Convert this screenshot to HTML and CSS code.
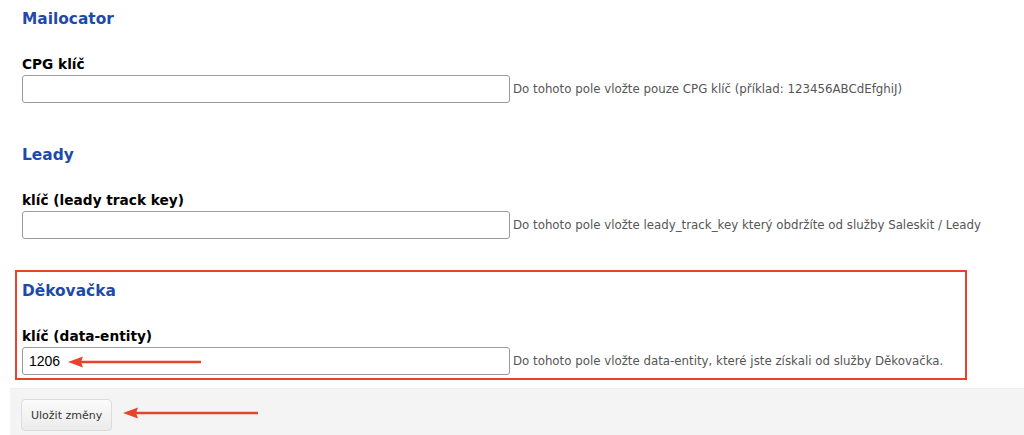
FILE: index.html
```html
<!DOCTYPE html>
<html lang="cs">
<head>
<meta charset="utf-8">
<title>Nastavení</title>
<link rel="stylesheet" href="styles.css">
</head>
<body>
<main class="settings">
  <section class="group">
    <h2 class="group-title">Mailocator</h2>
    <div class="field">
      <label class="field-label" for="cpg">CPG klíč</label>
      <div class="field-row">
        <input class="field-input" id="cpg" type="text" value="">
        <span class="field-help">Do tohoto pole vložte pouze CPG klíč (příklad: 123456ABCdEfghiJ)</span>
      </div>
    </div>
  </section>
  <section class="group">
    <h2 class="group-title">Leady</h2>
    <div class="field">
      <label class="field-label" for="leady">klíč (leady track key)</label>
      <div class="field-row">
        <input class="field-input" id="leady" type="text" value="">
        <span class="field-help">Do tohoto pole vložte leady_track_key který obdržíte od služby Saleskit / Leady</span>
      </div>
    </div>
  </section>
  <section class="group group-highlight">
    <h2 class="group-title">Děkovačka</h2>
    <div class="field">
      <label class="field-label" for="dek">klíč (data-entity)</label>
      <div class="field-row">
        <input class="field-input" id="dek" type="text" value="1206">
        <span class="field-help">Do tohoto pole vložte data-entity, které jste získali od služby Děkovačka.</span>
      </div>
    </div>
  </section>
</main>
<footer class="actions">
  <button class="btn" type="submit">Uložit změny</button>
</footer>

<svg class="arrow arrow-input" width="140" height="14" viewBox="0 0 140 14" aria-hidden="true">
  <line x1="12" y1="7" x2="133" y2="7" stroke="#e8412c" stroke-width="2.5"/>
  <polygon points="0,7 15,1.5 13,7 15,12.5" fill="#e8412c"/>
</svg>
<svg class="arrow arrow-button" width="140" height="14" viewBox="0 0 140 14" aria-hidden="true">
  <line x1="12" y1="7" x2="135" y2="7" stroke="#e8412c" stroke-width="2.5"/>
  <polygon points="0,7 15,1.5 13,7 15,12.5" fill="#e8412c"/>
</svg>
</body>
</html>
```

FILE: styles.css
```css
html, body {
  margin: 0;
  padding: 0;
  background: #ffffff;
}

body {
  position: relative;
  width: 1024px;
  height: 435px;
  overflow: hidden;
  font-family: "DejaVu Sans", Verdana, sans-serif;
  color: #000;
}

.settings {
  display: flex;
  flex-direction: column;
  gap: 26px;
  margin: -2px 0 0 15px;
  width: 952px;
}

.group {
  border: 2px solid transparent;
  padding: 9px 5px 3px;
}

.group-highlight {
  border-color: #e8412c;
}

.group-title {
  margin: 0 0 26px;
  font-size: 15.4px;
  line-height: 20px;
  font-weight: bold;
  color: #1f4aa8;
}

.field-label {
  display: block;
  font-size: 13.7px;
  line-height: 18px;
  font-weight: bold;
  margin-bottom: 2px;
}

.field-row {
  display: flex;
  align-items: center;
  gap: 3px;
}

.field-input {
  flex: none;
  box-sizing: border-box;
  width: 488px;
  height: 28px;
  margin: 0;
  padding: 0 6px;
  border: 1px solid #9a9a9a;
  border-radius: 3px;
  font-family: "Liberation Sans", Arial, sans-serif;
  font-size: 14px;
  color: #000;
  background: #fff;
}

.field-help {
  flex: none;
  font-size: 11.8px;
  color: #555;
  white-space: nowrap;
}

.actions {
  box-sizing: border-box;
  height: 47px;
  margin: 8px 0 0 10px;
  padding: 10px 11px 0;
  background: #f4f4f4;
  border-top: 1px solid #ededed;
}

.btn {
  height: 32px;
  padding: 0 9px;
  border: 1px solid #dcdcdc;
  border-radius: 4px;
  background: linear-gradient(#fbfbfb, #ececec);
  font-family: "DejaVu Sans", Verdana, sans-serif;
  font-size: 11px;
  color: #333;
}

.arrow {
  position: absolute;
}

.arrow-input {
  left: 68px;
  top: 355px;
}

.arrow-button {
  left: 123px;
  top: 406px;
}
```
